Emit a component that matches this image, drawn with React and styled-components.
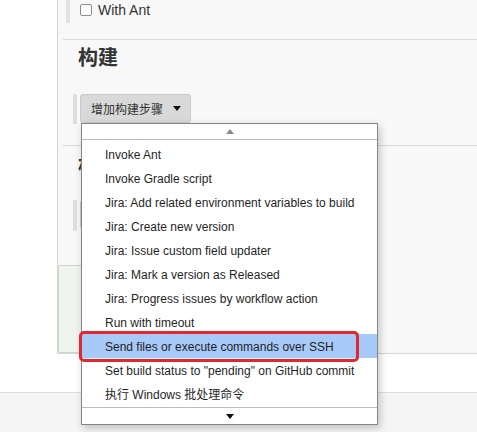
import React from "react";
import styled, { createGlobalStyle } from "styled-components";

const GlobalStyle = createGlobalStyle`
  html, body { margin: 0; padding: 0; background: #fff; }
  body {
    font-family: "Liberation Sans", Arial, "Noto Sans CJK SC", sans-serif;
    color: #333;
  }
  * { box-sizing: border-box; }
`;

const Root = styled.div`
  position: relative;
  width: 477px;
  height: 432px;
  overflow: hidden;
  display: flex;
  flex-direction: column;
`;

const Main = styled.div`
  display: flex;
  height: 354px;
  flex: none;
`;

const Side = styled.div`
  width: 58px;
  background: #fff;
  border-right: 1px solid #d3d3d3;
`;

const Panel = styled.div`
  flex: 1;
  background: #f8f8f8;
  border-bottom: 1px solid #d6d6d6;
  display: flex;
  flex-direction: column;
`;

const CheckRow = styled.div`
  margin-left: 8px;
  height: 23px;
  border-left: 4px solid #e2e2e2;
  padding-left: 10px;
  display: flex;
  align-items: center;
  gap: 6px;
  font-size: 14px;
  color: #333;
  padding-bottom: 4px;
`;

const Check = styled.span`
  width: 12px;
  height: 12px;
  border: 1px solid #8c8c8c;
  border-radius: 2px;
  background: #fff;
`;

const Divider = styled.div`
  margin-left: 5px;
  margin-top: ${(p) => p.$top}px;
  height: 1px;
  background: #d9d9d9;
`;

const Heading = styled.h2`
  margin: ${(p) => p.$top}px 0 0 20px;
  height: 24px;
  line-height: 24px;
  font-size: 20px;
  font-weight: bold;
  color: #333;
`;

const ButtonGroup = styled.div`
  margin: ${(p) => p.$top}px 0 0 15px;
  height: ${(p) => p.$h}px;
  border-left: 4px solid #dedede;
  padding-left: 3px;
  display: flex;
  align-items: flex-start;
`;

const Button = styled.div`
  height: 29px;
  min-width: 108px;
  padding: 0 9px 0 10px;
  display: flex;
  align-items: center;
  gap: 10px;
  background: #d9d9d9;
  border: 1px solid #c9c9c9;
  border-radius: 3px;
  font-size: 12px;
  color: #333;
  white-space: nowrap;
`;

const GreenBox = styled.div`
  margin-top: 34px;
  width: 240px;
  height: 88px;
  background: #eff5ee;
  border: 1px solid #c9d7c6;
  border-radius: 2px;
`;

const Spacer = styled.div`
  height: 38px;
  flex: none;
  background: #fff;
`;

const Footer = styled.div`
  flex: 1;
  background: #f5f5f5;
  border-top: 1px solid #dddddd;
`;

const Dropdown = styled.div`
  position: absolute;
  left: 81px;
  top: 123px;
  width: 297px;
  height: 302px;
  background: #fff;
  border: 1px solid #858585;
  box-shadow: 2px 3px 8px rgba(0, 0, 0, 0.22);
  display: flex;
  flex-direction: column;
`;

const Scroller = styled.div`
  height: ${(p) => (p.$down ? 17 : 16)}px;
  display: flex;
  align-items: center;
  justify-content: center;
  border-bottom: ${(p) => (p.$down ? "none" : "1px solid #bcbcbc")};
  border-top: ${(p) => (p.$down ? "1px solid #bcbcbc" : "none")};
`;

const List = styled.div`
  flex: 1;
  padding: 2px 0 1px;
`;

const Item = styled.div`
  height: 24px;
  line-height: 26px;
  padding-left: 23px;
  font-size: 12px;
  color: #1f1f1f;
  white-space: nowrap;
  background: ${(p) => (p.$active ? "#a7caf8" : "transparent")};
`;

const Highlight = styled.div`
  position: absolute;
  left: 79px;
  top: 331px;
  width: 280px;
  height: 31px;
  border: 3px solid #e3272c;
  border-radius: 5px;
`;

const Tri = ({ up, color }) => (
  <svg width="8" height="5" viewBox="0 0 8 5">
    <path d={up ? "M0 5 L4 0 L8 5 Z" : "M0 0 L8 0 L4 5 Z"} fill={color} />
  </svg>
);

const items = [
  "Invoke Ant",
  "Invoke Gradle script",
  "Jira: Add related environment variables to build",
  "Jira: Create new version",
  "Jira: Issue custom field updater",
  "Jira: Mark a version as Released",
  "Jira: Progress issues by workflow action",
  "Run with timeout",
  "Send files or execute commands over SSH",
  'Set build status to "pending" on GitHub commit',
  "执行 Windows 批处理命令",
];

export default function App() {
  return (
    <Root>
      <GlobalStyle />
      <Main>
        <Side />
        <Panel>
          <CheckRow>
            <Check />
            With Ant
          </CheckRow>
          <Divider $top={16} />
          <Heading $top={6}>构建</Heading>
          <ButtonGroup $top={24} $h={30}>
            <Button>
              增加构建步骤
              <Tri color="#111" />
            </Button>
          </ButtonGroup>
          <Divider $top={21} />
          <Heading $top={8}>构</Heading>
          <ButtonGroup $top={22} $h={31}>
            <Button />
          </ButtonGroup>
          <GreenBox />
        </Panel>
      </Main>
      <Spacer />
      <Footer />
      <Dropdown>
        <Scroller>
          <Tri up color="#8a8a8a" />
        </Scroller>
        <List>
          {items.map((t, i) => (
            <Item key={t} $active={i === 8}>
              {t}
            </Item>
          ))}
        </List>
        <Scroller $down>
          <Tri color="#111" />
        </Scroller>
      </Dropdown>
      <Highlight />
    </Root>
  );
}
